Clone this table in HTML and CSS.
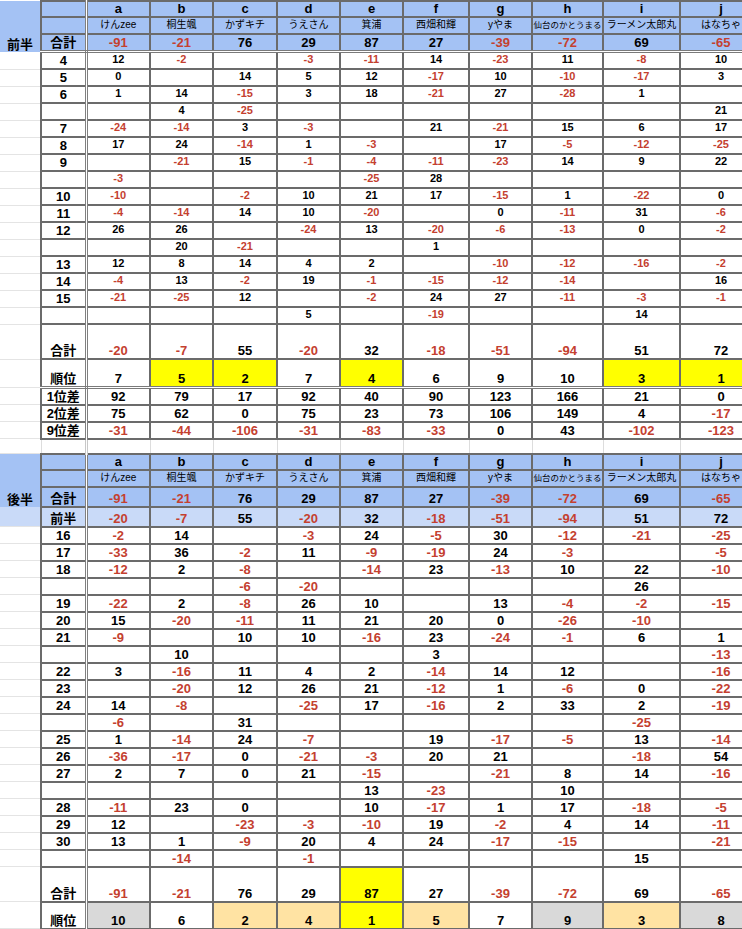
FILE: index.html
```html
<!DOCTYPE html>
<html lang="ja">
<head>
<meta charset="utf-8">
<title>成績表</title>
<link rel="stylesheet" href="styles.css">
</head>
<body>
<table class="sheet">
<colgroup>
<col class="w0"><col class="w1"><col class="wa"><col class="wb"><col class="wc"><col class="wd"><col class="we"><col class="wf"><col class="wg"><col class="wh"><col class="wi"><col class="wj">
</colgroup>
<tbody>
<tr class="hd1"><td class="c0 hb" rowspan="3">前半</td><td class="lb"></td><td>a</td><td>b</td><td>c</td><td>d</td><td>e</td><td>f</td><td>g</td><td>h</td><td>i</td><td>j</td></tr>
<tr class="hd2"><td class="lb"></td><td>けんzee</td><td>桐生颯</td><td>かずキチ</td><td>うえさん</td><td>箕浦</td><td>西畑和輝</td><td>yやま</td><td class="sm">仙台のかとうまる</td><td>ラーメン太郎丸</td><td>はなちゃ</td></tr>
<tr class="hd3 dbl"><td class="lb">合計</td><td class="r">-91</td><td class="r">-21</td><td>76</td><td>29</td><td>87</td><td>27</td><td class="r">-39</td><td class="r">-72</td><td>69</td><td class="r">-65</td></tr>

<tr class="row"><td class="c0"></td><td class="lb">4</td><td>12</td><td class="r">-2</td><td></td><td class="r">-3</td><td class="r">-11</td><td>14</td><td class="r">-23</td><td>11</td><td class="r">-8</td><td>10</td></tr>
<tr class="row"><td class="c0"></td><td class="lb">5</td><td>0</td><td></td><td>14</td><td>5</td><td>12</td><td class="r">-17</td><td>10</td><td class="r">-10</td><td class="r">-17</td><td>3</td></tr>
<tr class="row"><td class="c0"></td><td class="lb">6</td><td>1</td><td>14</td><td class="r">-15</td><td>3</td><td>18</td><td class="r">-21</td><td>27</td><td class="r">-28</td><td>1</td><td></td></tr>
<tr class="row"><td class="c0"></td><td class="lb"></td><td></td><td>4</td><td class="r">-25</td><td></td><td></td><td></td><td></td><td></td><td></td><td>21</td></tr>
<tr class="row"><td class="c0"></td><td class="lb">7</td><td class="r">-24</td><td class="r">-14</td><td>3</td><td class="r">-3</td><td></td><td>21</td><td class="r">-21</td><td>15</td><td>6</td><td>17</td></tr>
<tr class="row"><td class="c0"></td><td class="lb">8</td><td>17</td><td>24</td><td class="r">-14</td><td>1</td><td class="r">-3</td><td></td><td>17</td><td class="r">-5</td><td class="r">-12</td><td class="r">-25</td></tr>
<tr class="row"><td class="c0"></td><td class="lb">9</td><td></td><td class="r">-21</td><td>15</td><td class="r">-1</td><td class="r">-4</td><td class="r">-11</td><td class="r">-23</td><td>14</td><td>9</td><td>22</td></tr>
<tr class="row"><td class="c0"></td><td class="lb"></td><td class="r">-3</td><td></td><td></td><td></td><td class="r">-25</td><td>28</td><td></td><td></td><td></td><td></td></tr>
<tr class="row"><td class="c0"></td><td class="lb">10</td><td class="r">-10</td><td></td><td class="r">-2</td><td>10</td><td>21</td><td>17</td><td class="r">-15</td><td>1</td><td class="r">-22</td><td>0</td></tr>
<tr class="row"><td class="c0"></td><td class="lb">11</td><td class="r">-4</td><td class="r">-14</td><td>14</td><td>10</td><td class="r">-20</td><td></td><td>0</td><td class="r">-11</td><td>31</td><td class="r">-6</td></tr>
<tr class="row"><td class="c0"></td><td class="lb">12</td><td>26</td><td>26</td><td></td><td class="r">-24</td><td>13</td><td class="r">-20</td><td class="r">-6</td><td class="r">-13</td><td>0</td><td class="r">-2</td></tr>
<tr class="row"><td class="c0"></td><td class="lb"></td><td></td><td>20</td><td class="r">-21</td><td></td><td></td><td>1</td><td></td><td></td><td></td><td></td></tr>
<tr class="row"><td class="c0"></td><td class="lb">13</td><td>12</td><td>8</td><td>14</td><td>4</td><td>2</td><td></td><td class="r">-10</td><td class="r">-12</td><td class="r">-16</td><td class="r">-2</td></tr>
<tr class="row"><td class="c0"></td><td class="lb">14</td><td class="r">-4</td><td>13</td><td class="r">-2</td><td>19</td><td class="r">-1</td><td class="r">-15</td><td class="r">-12</td><td class="r">-14</td><td></td><td>16</td></tr>
<tr class="row"><td class="c0"></td><td class="lb">15</td><td class="r">-21</td><td class="r">-25</td><td>12</td><td></td><td class="r">-2</td><td>24</td><td>27</td><td class="r">-11</td><td class="r">-3</td><td class="r">-1</td></tr>
<tr class="row"><td class="c0"></td><td class="lb"></td><td></td><td></td><td></td><td>5</td><td></td><td class="r">-19</td><td></td><td></td><td>14</td><td></td></tr>

<tr class="sum big"><td class="c0"></td><td class="lb">合計</td><td class="r">-20</td><td class="r">-7</td><td>55</td><td class="r">-20</td><td>32</td><td class="r">-18</td><td class="r">-51</td><td class="r">-94</td><td>51</td><td>72</td></tr>
<tr class="rank big dbl"><td class="c0"></td><td class="lb">順位</td><td>7</td><td class="y">5</td><td class="y">2</td><td>7</td><td class="y">4</td><td>6</td><td>9</td><td>10</td><td class="y">3</td><td class="y">1</td></tr>
<tr class="row big"><td class="c0"></td><td class="lb">1位差</td><td>92</td><td>79</td><td>17</td><td>92</td><td>40</td><td>90</td><td>123</td><td>166</td><td>21</td><td>0</td></tr>
<tr class="row big"><td class="c0"></td><td class="lb">2位差</td><td>75</td><td>62</td><td>0</td><td>75</td><td>23</td><td>73</td><td>106</td><td>149</td><td>4</td><td class="r">-17</td></tr>
<tr class="row big"><td class="c0"></td><td class="lb">9位差</td><td class="r">-31</td><td class="r">-44</td><td class="r">-106</td><td class="r">-31</td><td class="r">-83</td><td class="r">-33</td><td>0</td><td>43</td><td class="r">-102</td><td class="r">-123</td></tr>

<tr class="gap"><td class="c0"></td><td class="lb"></td><td></td><td></td><td></td><td></td><td></td><td></td><td></td><td></td><td></td><td></td></tr>

<tr class="hd1"><td class="c0 hb" rowspan="3">後半</td><td class="lb"></td><td>a</td><td>b</td><td>c</td><td>d</td><td>e</td><td>f</td><td>g</td><td>h</td><td>i</td><td>j</td></tr>
<tr class="hd2"><td class="lb"></td><td>けんzee</td><td>桐生颯</td><td>かずキチ</td><td>うえさん</td><td>箕浦</td><td>西畑和輝</td><td>yやま</td><td class="sm">仙台のかとうまる</td><td>ラーメン太郎丸</td><td>はなちゃ</td></tr>
<tr class="hd3 tall"><td class="lb">合計</td><td class="r">-91</td><td class="r">-21</td><td>76</td><td>29</td><td>87</td><td>27</td><td class="r">-39</td><td class="r">-72</td><td>69</td><td class="r">-65</td></tr>
<tr class="pre"><td class="c0"></td><td class="lb">前半</td><td class="r">-20</td><td class="r">-7</td><td>55</td><td class="r">-20</td><td>32</td><td class="r">-18</td><td class="r">-51</td><td class="r">-94</td><td>51</td><td>72</td></tr>

<tr class="row big"><td class="c0"></td><td class="lb">16</td><td class="r">-2</td><td>14</td><td></td><td class="r">-3</td><td>24</td><td class="r">-5</td><td>30</td><td class="r">-12</td><td class="r">-21</td><td class="r">-25</td></tr>
<tr class="row big"><td class="c0"></td><td class="lb">17</td><td class="r">-33</td><td>36</td><td class="r">-2</td><td>11</td><td class="r">-9</td><td class="r">-19</td><td>24</td><td class="r">-3</td><td></td><td class="r">-5</td></tr>
<tr class="row big"><td class="c0"></td><td class="lb">18</td><td class="r">-12</td><td>2</td><td class="r">-8</td><td></td><td class="r">-14</td><td>23</td><td class="r">-13</td><td>10</td><td>22</td><td class="r">-10</td></tr>
<tr class="row big"><td class="c0"></td><td class="lb"></td><td></td><td></td><td class="r">-6</td><td class="r">-20</td><td></td><td></td><td></td><td></td><td>26</td><td></td></tr>
<tr class="row big"><td class="c0"></td><td class="lb">19</td><td class="r">-22</td><td>2</td><td class="r">-8</td><td>26</td><td>10</td><td></td><td>13</td><td class="r">-4</td><td class="r">-2</td><td class="r">-15</td></tr>
<tr class="row big"><td class="c0"></td><td class="lb">20</td><td>15</td><td class="r">-20</td><td class="r">-11</td><td>11</td><td>21</td><td>20</td><td>0</td><td class="r">-26</td><td class="r">-10</td><td></td></tr>
<tr class="row big"><td class="c0"></td><td class="lb">21</td><td class="r">-9</td><td></td><td>10</td><td>10</td><td class="r">-16</td><td>23</td><td class="r">-24</td><td class="r">-1</td><td>6</td><td>1</td></tr>
<tr class="row big"><td class="c0"></td><td class="lb"></td><td></td><td>10</td><td></td><td></td><td></td><td>3</td><td></td><td></td><td></td><td class="r">-13</td></tr>
<tr class="row big"><td class="c0"></td><td class="lb">22</td><td>3</td><td class="r">-16</td><td>11</td><td>4</td><td>2</td><td class="r">-14</td><td>14</td><td>12</td><td></td><td class="r">-16</td></tr>
<tr class="row big"><td class="c0"></td><td class="lb">23</td><td></td><td class="r">-20</td><td>12</td><td>26</td><td>21</td><td class="r">-12</td><td>1</td><td class="r">-6</td><td>0</td><td class="r">-22</td></tr>
<tr class="row big"><td class="c0"></td><td class="lb">24</td><td>14</td><td class="r">-8</td><td></td><td class="r">-25</td><td>17</td><td class="r">-16</td><td>2</td><td>33</td><td>2</td><td class="r">-19</td></tr>
<tr class="row big"><td class="c0"></td><td class="lb"></td><td class="r">-6</td><td></td><td>31</td><td></td><td></td><td></td><td></td><td></td><td class="r">-25</td><td></td></tr>
<tr class="row big"><td class="c0"></td><td class="lb">25</td><td>1</td><td class="r">-14</td><td>24</td><td class="r">-7</td><td></td><td>19</td><td class="r">-17</td><td class="r">-5</td><td>13</td><td class="r">-14</td></tr>
<tr class="row big"><td class="c0"></td><td class="lb">26</td><td class="r">-36</td><td class="r">-17</td><td>0</td><td class="r">-21</td><td class="r">-3</td><td>20</td><td>21</td><td></td><td class="r">-18</td><td>54</td></tr>
<tr class="row big"><td class="c0"></td><td class="lb">27</td><td>2</td><td>7</td><td>0</td><td>21</td><td class="r">-15</td><td></td><td class="r">-21</td><td>8</td><td>14</td><td class="r">-16</td></tr>
<tr class="row big"><td class="c0"></td><td class="lb"></td><td></td><td></td><td></td><td></td><td>13</td><td class="r">-23</td><td></td><td>10</td><td></td><td></td></tr>
<tr class="row big"><td class="c0"></td><td class="lb">28</td><td class="r">-11</td><td>23</td><td>0</td><td></td><td>10</td><td class="r">-17</td><td>1</td><td>17</td><td class="r">-18</td><td class="r">-5</td></tr>
<tr class="row big"><td class="c0"></td><td class="lb">29</td><td>12</td><td></td><td class="r">-23</td><td class="r">-3</td><td class="r">-10</td><td>19</td><td class="r">-2</td><td>4</td><td>14</td><td class="r">-11</td></tr>
<tr class="row big"><td class="c0"></td><td class="lb">30</td><td>13</td><td>1</td><td class="r">-9</td><td>20</td><td>4</td><td>24</td><td class="r">-17</td><td class="r">-15</td><td></td><td class="r">-21</td></tr>
<tr class="row big"><td class="c0"></td><td class="lb"></td><td></td><td class="r">-14</td><td></td><td class="r">-1</td><td></td><td></td><td></td><td></td><td>15</td><td></td></tr>

<tr class="sum big"><td class="c0"></td><td class="lb">合計</td><td class="r">-91</td><td class="r">-21</td><td>76</td><td>29</td><td class="y">87</td><td>27</td><td class="r">-39</td><td class="r">-72</td><td>69</td><td class="r">-65</td></tr>
<tr class="rank2 big"><td class="c0"></td><td class="lb">順位</td><td class="g">10</td><td>6</td><td class="o">2</td><td class="o">4</td><td class="y">1</td><td class="o">5</td><td>7</td><td class="g">9</td><td class="o">3</td><td class="g">8</td></tr>
<tr class="gap"><td class="c0"></td><td class="lb"></td><td></td><td></td><td></td><td></td><td></td><td></td><td></td><td></td><td></td><td></td></tr>
</tbody>
</table>
</body>
</html>
```
FILE: styles.css
```css
html, body {
  margin: 0;
  padding: 0;
  overflow: hidden;
  background: #ffffff;
}

body {
  font-family: "Liberation Sans", Arial, "Noto Sans CJK JP", sans-serif;
  color: #000000;
}

.sheet {
  border-collapse: collapse;
  table-layout: fixed;
  width: 762px;
}

.w0 { width: 41px; }
.w1 { width: 45px; }
.wa { width: 64px; }
.wb { width: 63px; }
.wc { width: 64px; }
.wd { width: 63px; }
.we { width: 63px; }
.wf { width: 66px; }
.wg { width: 63px; }
.wh { width: 71px; }
.wi { width: 77px; }
.wj { width: 82px; }

.sheet td {
  padding: 0 1px 2px;
  text-align: center;
  vertical-align: bottom;
  font-weight: bold;
  font-size: 11px;
  line-height: 13px;
  border: 2px solid #6b6b6b;
  white-space: nowrap;
  overflow: hidden;
}

.sheet td.c0 {
  border: none;
  border-bottom: 1px solid #e4e4e4;
}

.sheet td.hb {
  background: #a4c2f4;
  border-bottom: none;
  font-size: 13px;
  line-height: 15px;
  padding-bottom: 0;
}

.sheet td.lb {
  font-size: 13px;
  line-height: 15px;
  padding-bottom: 0;
  border-right: 3px double #808080;
}

.hd1 td, .hd2 td, .hd3 td {
  background: #a4c2f4;
}

.hd1 { height: 15px; }
.hd1 td { font-size: 13px; line-height: 14px; padding-bottom: 0; }

.hd2 { height: 17px; }
.hd2 td { font-size: 10px; font-weight: normal; line-height: 12px; padding-bottom: 2px; }
.hd2 td.sm { font-size: 8.5px; padding-left: 0; padding-right: 0; }

.hd3 { height: 15px; }
.hd3.tall { height: 20px; }
.hd3 td { font-size: 13px; line-height: 14px; padding-bottom: 0; }

.dbl td:not(.c0) {
  border-bottom: 3px double #7a7a7a;
}

.pre { height: 20px; }
.pre td {
  background: #c9daf8;
  font-size: 13px;
  line-height: 14px;
  padding-bottom: 0;
}
.sheet .pre td.c0 { background: #c9daf8; }

.row { height: 17px; }
.sum { height: 35px; }
.rank { height: 28px; }
.rank2 { height: 27px; }

.big td {
  font-size: 13px;
  line-height: 15px;
  padding-bottom: 0;
}

.gap { height: 15px; }
.sheet .gap td {
  border-top: none;
  border-bottom: none;
  border-left: 1px solid #dddddd;
  border-right: 1px solid #dddddd;
}
.sheet .gap td.c0 {
  border-left: none;
  border-right: none;
  border-bottom: 1px solid #e4e4e4;
}
.sheet .gap td.lb {
  border-right: 3px double #c8c8c8;
}

.sheet td.r { color: #c4402f; }
.sheet td.y { background: #ffff00; }
.sheet td.o { background: #ffe3a3; }
.sheet td.g { background: #d9d9d9; }
```
